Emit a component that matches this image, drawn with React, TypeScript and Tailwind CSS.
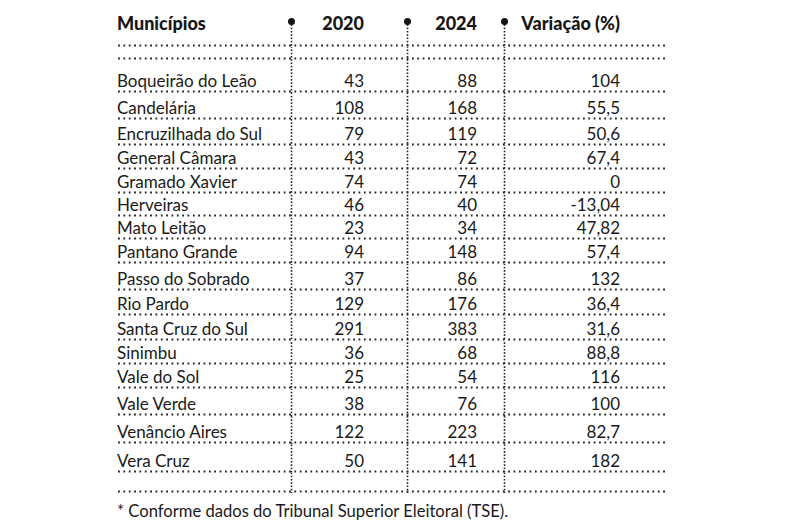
import React from "react";

type Row = { name: string; a: string; b: string; v: string; h: string };

const rows: Row[] = [
  { name: "Boqueirão do Leão", a: "43", b: "88", v: "104", h: "h-[33px]" },
  { name: "Candelária", a: "108", b: "168", v: "55,5", h: "h-[27px]" },
  { name: "Encruzilhada do Sul", a: "79", b: "119", v: "50,6", h: "h-[26px]" },
  { name: "General Câmara", a: "43", b: "72", v: "67,4", h: "h-[24px]" },
  { name: "Gramado Xavier", a: "74", b: "74", v: "0", h: "h-[24px]" },
  { name: "Herveiras", a: "46", b: "40", v: "-13,04", h: "h-[23px]" },
  { name: "Mato Leitão", a: "23", b: "34", v: "47,82", h: "h-[23px]" },
  { name: "Pantano Grande", a: "94", b: "148", v: "57,4", h: "h-[24px]" },
  { name: "Passo do Sobrado", a: "37", b: "86", v: "132", h: "h-[27px]" },
  { name: "Rio Pardo", a: "129", b: "176", v: "36,4", h: "h-[25px]" },
  { name: "Santa Cruz do Sul", a: "291", b: "383", v: "31,6", h: "h-[25px]" },
  { name: "Sinimbu", a: "36", b: "68", v: "88,8", h: "h-[24px]" },
  { name: "Vale do Sol", a: "25", b: "54", v: "116", h: "h-[24px]" },
  { name: "Vale Verde", a: "38", b: "76", v: "100", h: "h-[27px]" },
  { name: "Venâncio Aires", a: "122", b: "223", v: "82,7", h: "h-[28px]" },
  { name: "Vera Cruz", a: "50", b: "141", v: "182", h: "h-[29px]" },
];

const hLine =
  "bg-[image:radial-gradient(circle,#262626_0.9px,transparent_1.3px)] bg-[length:5.35px_3px] bg-repeat-x bg-bottom";
const vLine =
  "bg-[image:radial-gradient(circle,#262626_0.8px,transparent_1.2px)] bg-[length:3px_3.3px] bg-repeat-y bg-left";

function HeadCell({ label, w, pr }: { label: string; w: string; pr: string }) {
  return (
    <div className={`relative flex items-end justify-end ${w} ${pr} pb-[15px]`}>
      <div className={`absolute left-0 top-[23px] bottom-0 w-[3px] ${vLine}`} />
      <div className="absolute left-[-2px] top-[18px] h-[7px] w-[7px] rounded-full bg-[#161616]" />
      <span className="font-black text-[18px] leading-none text-[#161616]">{label}</span>
    </div>
  );
}

export default function App() {
  return (
    <div className="h-[530px] w-[790px] bg-white pl-[116px] text-[#1a1a1a] font-['Lato',sans-serif]">
      <div className="w-[551px]">
        <div className={`flex h-[47px] ${hLine}`}>
          <div className="flex w-[174px] items-end pb-[15px] pl-[1px]">
            <span className="font-black text-[18px] leading-none text-[#161616]">Municípios</span>
          </div>
          <HeadCell label="2020" w="w-[116px]" pr="pr-[42px]" />
          <HeadCell label="2024" w="w-[97px]" pr="pr-[26px]" />
          <HeadCell label="Variação (%)" w="w-[164px]" pr="pr-[47px]" />
        </div>
        <div className={`flex h-[13px] ${hLine}`}>
          <div className="w-[174px]" />
          <div className={`w-[116px] ${vLine}`} />
          <div className={`w-[97px] ${vLine}`} />
          <div className={`w-[164px] ${vLine}`} />
        </div>
        {rows.map((r) => (
          <div key={r.name} className={`flex ${r.h} ${hLine} text-[17px] leading-none`}>
            <div className="flex w-[174px] items-end pb-[4px] pl-[1px]">{r.name}</div>
            <div className={`flex w-[116px] items-end justify-end pb-[4px] pr-[42px] ${vLine}`}>{r.a}</div>
            <div className={`flex w-[97px] items-end justify-end pb-[4px] pr-[26px] ${vLine}`}>{r.b}</div>
            <div className={`flex w-[164px] items-end justify-end pb-[4px] pr-[47px] ${vLine}`}>{r.v}</div>
          </div>
        ))}
        <div className={`flex h-[20px] ${hLine}`}>
          <div className="w-[174px]" />
          <div className={`w-[116px] ${vLine}`} />
          <div className={`w-[97px] ${vLine}`} />
          <div className={`w-[164px] ${vLine}`} />
        </div>
        <div className="pl-[1px] pt-[10px] text-[16.6px] leading-none">
          * Conforme dados do Tribunal Superior Eleitoral (TSE).
        </div>
      </div>
    </div>
  );
}
